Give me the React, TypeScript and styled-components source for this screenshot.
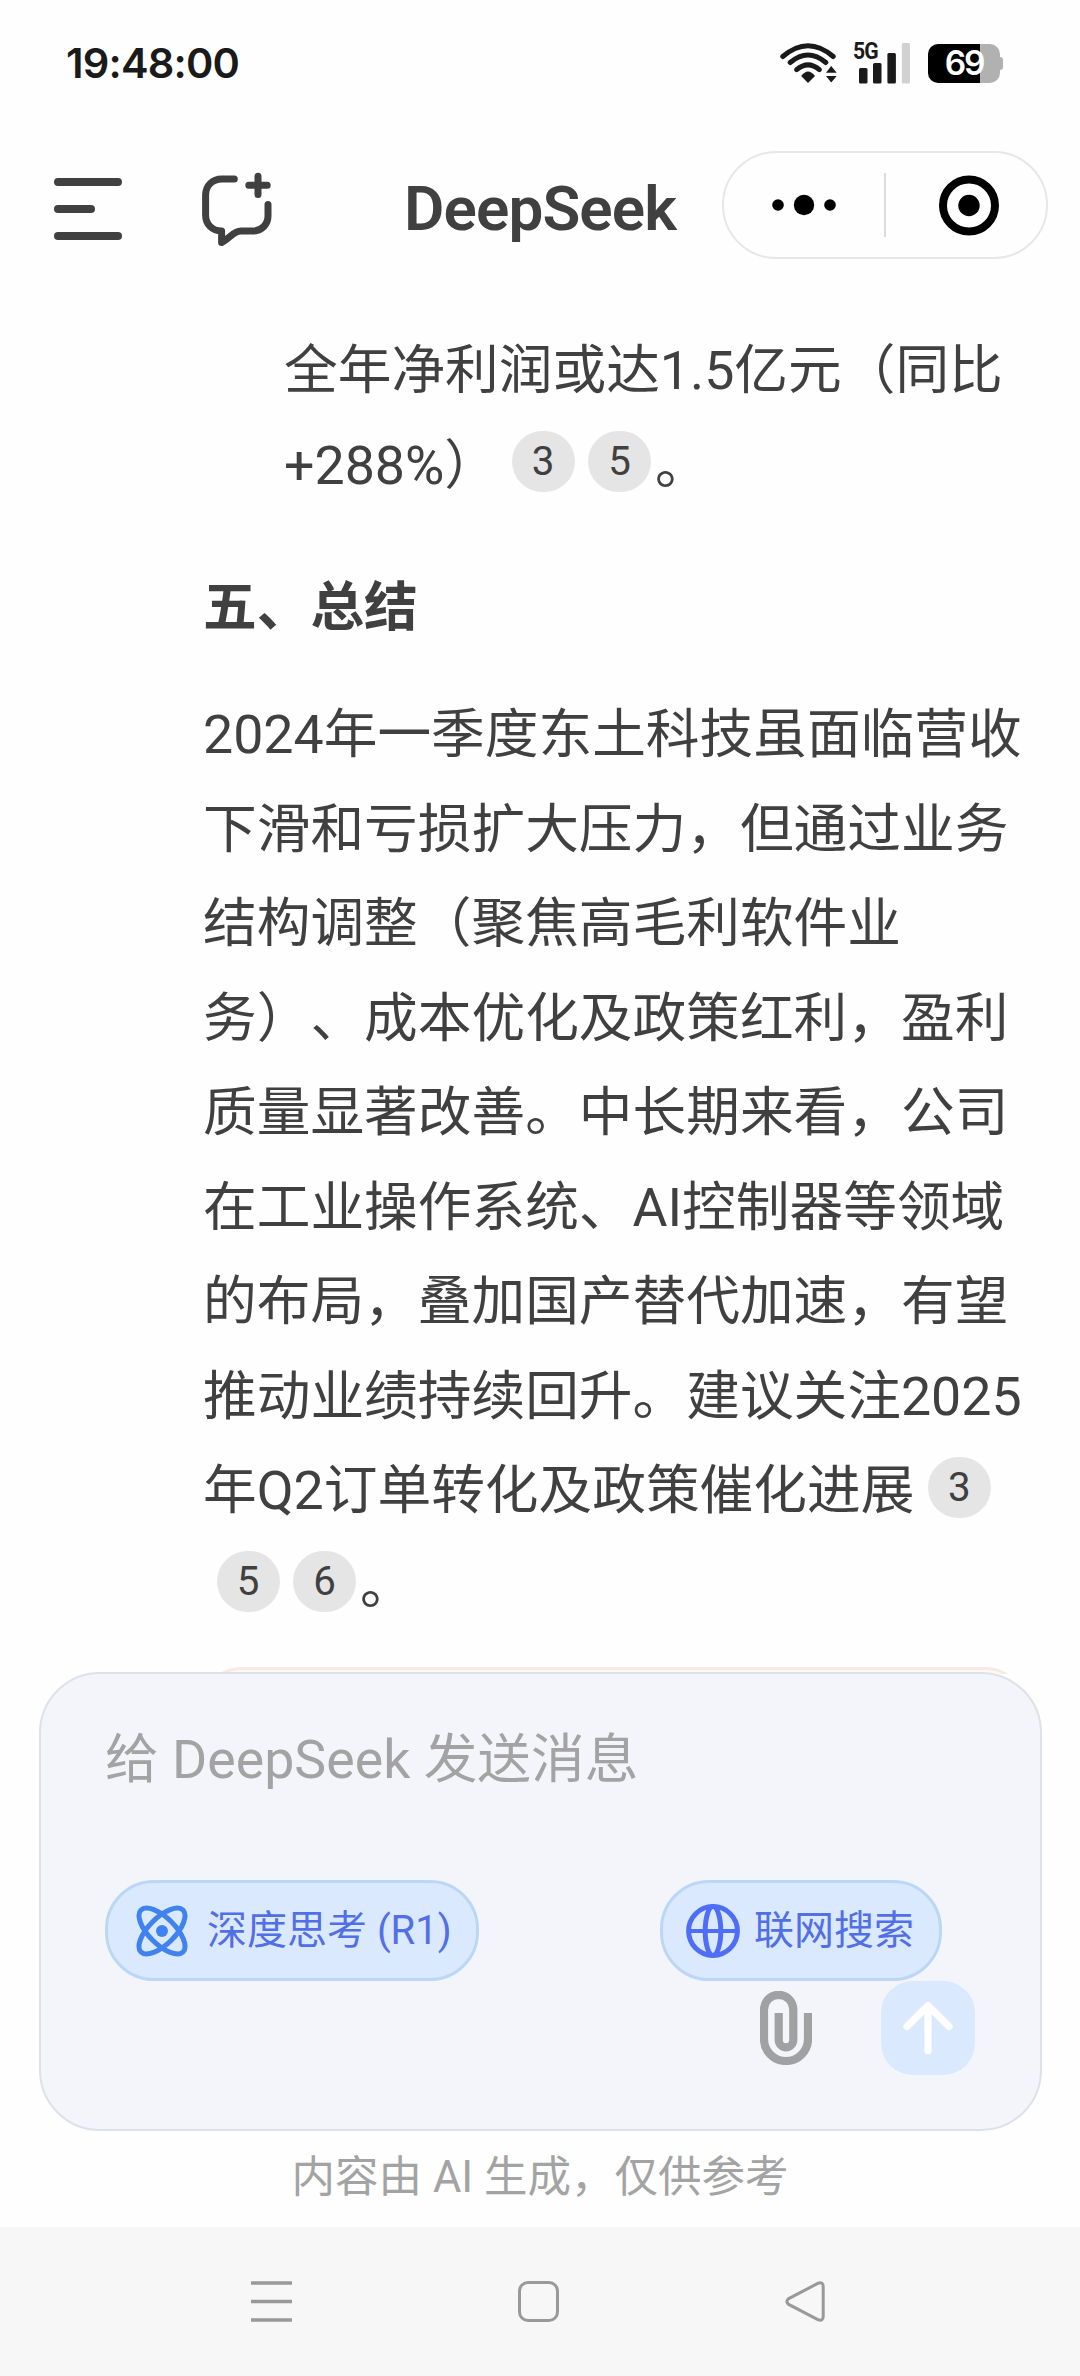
import React from "react";
import styled, { createGlobalStyle } from "styled-components";

const GlobalStyle = createGlobalStyle`
  * { box-sizing: border-box; }
  html, body { margin: 0; padding: 0; background: #fefefe; }
  svg { display: block; flex: none; }
`;

const Screen = styled.div`
  width: 1080px;
  height: 2376px;
  overflow: hidden;
  display: flex;
  flex-direction: column;
  background: #fefefe;
  color: #404040;
  font-family: Roboto, "Noto Sans CJK SC", sans-serif;
  text-spacing-trim: space-all;
`;

const StatusBar = styled.div`
  height: 124px;
  flex: none;
  display: flex;
  align-items: center;
  justify-content: space-between;
  padding: 2px 77px 0 66px;
`;

const Clock = styled.span`
  font: 600 41.5px/50px Inter, sans-serif;
  letter-spacing: -0.8px;
  color: #1a1a1a;
`;

const StatusIcons = styled.div`
  display: flex;
  align-items: center;
`;

const Signal = styled.div`
  position: relative;
  margin: 0 18px 0 16px;
`;

const NetworkType = styled.span`
  position: absolute;
  left: 0;
  top: -1px;
  font: 700 24px/20px Roboto, sans-serif;
  letter-spacing: -1px;
  transform: scaleX(0.88);
  transform-origin: left;
  color: #1a1a1a;
`;

const Battery = styled.div`
  width: 72px;
  height: 39px;
  border-radius: 10px;
  display: flex;
  align-items: center;
  justify-content: center;
  background: linear-gradient(90deg, #000 52px, #b1b1b1 52px);
  color: #fff;
  font: 600 33.5px/39px Inter, sans-serif;
  letter-spacing: -2.2px;
`;

const BatteryTip = styled.div`
  width: 3px;
  height: 13px;
  border-radius: 0 3px 3px 0;
  background: #b1b1b1;
`;

const Header = styled.header`
  height: 151px;
  flex: none;
  display: flex;
  align-items: flex-start;
  padding: 27px 32px 0 54px;
`;

const Title = styled.h1`
  margin: 20px 0 0 132px;
  width: 319px;
  font-size: 62px;
  line-height: 76px;
  font-weight: 600;
  letter-spacing: -0.9px;
  white-space: nowrap;
`;

const Capsule = styled.div`
  width: 326px;
  height: 108px;
  border: 2px solid #e7e7e7;
  border-radius: 54px;
  display: flex;
  align-items: center;
`;

const CapsuleHalf = styled.div<{ $shift?: number }>`
  flex: 0 0 160px;
  display: flex;
  justify-content: center;
  padding-left: ${(p) => p.$shift ?? 0}px;
`;

const CapsuleDivider = styled.div`
  width: 2px;
  height: 64px;
  background: #dcdcdc;
`;

const Conversation = styled.main`
  height: 1399px;
  flex: none;
  overflow: hidden;
  padding: 49px 52px 0 203px;
`;

const ListText = styled.p`
  margin: 0 0 0 81px;
  font-size: 53.7px;
  line-height: 94.5px;
`;

const SectionTitle = styled.h3`
  margin: 48px 0 32.5px;
  font-size: 53.7px;
  line-height: 94.5px;
  font-weight: 700;
`;

const Paragraph = styled.p`
  margin: 0;
  font-size: 53.7px;
  line-height: 94.5px;
`;

const Cite = styled.span`
  display: inline-flex;
  align-items: center;
  justify-content: center;
  width: 63px;
  height: 61px;
  margin-left: 13.5px;
  border-radius: 31px;
  background: #e5e5e5;
  font-size: 40.3px;
  line-height: 61px;
  vertical-align: 8.5px;

  &:last-of-type {
    margin-right: 4px;
  }
`;

const Notice = styled.div`
  height: 120px;
  margin: 33.5px 4px 0 0;
  border: 3px solid #f8e9e2;
  border-radius: 38px;
  background: #fff8f5;
`;

const Composer = styled.section`
  position: relative;
  flex: none;
  width: 1003px;
  height: 459px;
  margin: -2px 0 0 39px;
  padding: 49px 65px 0 64px;
  border: 2px solid #dde1e8;
  border-radius: 61px;
  background: #f3f5fa;
`;

const Placeholder = styled.div`
  height: 157px;
  font-size: 53.7px;
  line-height: 74px;
  color: #a3a3a3;
`;

const ToggleRow = styled.div`
  display: flex;
  gap: 181px;
`;

const Toggle = styled.div<{ $width: number; $inset: number; $gap: number }>`
  width: ${(p) => p.$width}px;
  height: 101px;
  display: flex;
  align-items: center;
  gap: ${(p) => p.$gap}px;
  padding-left: ${(p) => p.$inset}px;
  border: 3px solid #bbd7f6;
  border-radius: 49px;
  background: #dae9fe;
  color: #526fe6;
  font-size: 40px;
  line-height: 60px;
  white-space: nowrap;
`;

const ActionRow = styled.div`
  display: flex;
  justify-content: flex-end;
  align-items: center;
  gap: 69px;
`;

const SendButton = styled.div`
  width: 94px;
  height: 94px;
  border-radius: 32px;
  background: #dbe9fe;
  display: flex;
  align-items: center;
  justify-content: center;
`;

const Disclaimer = styled.div`
  flex: none;
  height: 96px;
  padding-top: 17px;
  text-align: center;
  font-size: 43.5px;
  line-height: 60px;
  color: #a3a3a3;
`;

const NavBar = styled.nav`
  flex: 1;
  display: flex;
  align-items: flex-start;
  justify-content: space-between;
  padding: 54px 255px 0 251px;
  background: #f7f7f7;
`;

const MenuIcon = () => (
  <svg width="68" height="62" viewBox="0 0 68 62" stroke="#404040" strokeWidth="8" strokeLinecap="round">
    <path d="M4 4H64M4 31H37M4 58H64" />
  </svg>
);

const IconSlot = styled.div<{ $left: number; $top: number }>`
  margin: ${(p) => p.$top}px 0 0 ${(p) => p.$left}px;
`;

const NewChatIcon = () => (
  <svg width="70" height="75" viewBox="202 172 70 75" fill="none" stroke="#404040" strokeWidth="7" strokeLinecap="round" strokeLinejoin="round">
    <path d="M234.3 179H222C212 179 205.6 186 205.6 195V215C205.6 224 212 231 221.6 231V242.5C229 239 233 231 241 231H253C262 231 268 224 268 216V204.5" />
    <path d="M258 176.2V194.5M248.8 185.3H267.2" />
  </svg>
);

const WifiIcon = () => (
  <svg width="57" height="42" viewBox="780 42 57 42" fill="none" stroke="#1a1a1a" strokeWidth="5" strokeLinecap="round">
    <path d="M782.8 56.5Q808 35 833.2 56.5M790.2 62.5Q808 47.5 825.8 62.5M796.7 69.7Q808 60 819.3 69.7" />
    <path d="M801.2 76Q808 66.8 815 76L808 83Z" fill="#1a1a1a" stroke="none" />
    <path d="M826 72.7L831.2 66L836.7 72.7ZM826 76L831.2 82.5L836.7 76Z" fill="#1a1a1a" stroke="none" />
  </svg>
);

const SignalBars = () => (
  <svg width="57" height="42" viewBox="853 42 57 42" fill="#1a1a1a">
    <rect x="859" y="68" width="8.5" height="15.5" rx="1.5" />
    <rect x="873" y="63" width="8.5" height="20.5" rx="1.5" />
    <rect x="887.4" y="53" width="8.5" height="30.5" rx="1.5" />
    <rect x="901.8" y="43" width="8.2" height="40.5" rx="1.5" fill="#d1d1d1" />
  </svg>
);

const DotsIcon = () => (
  <svg width="64" height="22" viewBox="0 0 64 22">
    <circle cx="6" cy="11" r="5.8" />
    <circle cx="32" cy="11" r="10.2" />
    <circle cx="58" cy="11" r="5.8" />
  </svg>
);

const TargetIcon = () => (
  <svg width="60" height="62" viewBox="0 0 60 62">
    <circle cx="30" cy="31.5" r="26" fill="none" stroke="#000" strokeWidth="8" />
    <circle cx="30" cy="31.5" r="10.7" />
  </svg>
);

const AtomIcon = () => (
  <svg width="52" height="52" viewBox="-26 -26 52 52" fill="none" stroke="#4083ef" strokeWidth="5">
    <ellipse rx="29.7" ry="13.2" transform="rotate(45)" />
    <ellipse rx="29.7" ry="13.2" transform="rotate(-45)" />
    <circle r="6" fill="#4083ef" stroke="none" />
  </svg>
);

const GlobeIcon = () => (
  <svg width="54" height="54" viewBox="-27 -27 54 54" fill="none" stroke="#4f6ef7" strokeWidth="5">
    <circle r="24.4" />
    <ellipse rx="7.8" ry="24.4" />
    <path d="M-25 0H25" strokeWidth="4" />
  </svg>
);

const ClipIcon = () => (
  <svg width="52" height="74" viewBox="760 1991 52 74" fill="none" stroke="#a0a1a3" strokeWidth="8.2">
    <path d="M808 2013V2039a22 22 0 0 1-44 0V2009.5a14.65 14.65 0 0 1 29.3 0V2040a7.3 7.3 0 0 1-14.6 0V2013" />
  </svg>
);

const ArrowUpIcon = () => (
  <svg width="50" height="54" viewBox="0 0 50 54" fill="none" stroke="#fff" strokeWidth="7.2" strokeLinecap="round" strokeLinejoin="round">
    <path d="M25 50V4.5M4 25.5L25 4.5L46 25.5" />
  </svg>
);

export default function App() {
  return (
    <Screen>
      <GlobalStyle />
      <StatusBar>
        <Clock>19:48:00</Clock>
        <StatusIcons>
          <WifiIcon />
          <Signal>
            <SignalBars />
            <NetworkType>5G</NetworkType>
          </Signal>
          <Battery>69</Battery>
          <BatteryTip />
        </StatusIcons>
      </StatusBar>

      <Header>
        <IconSlot $left={0} $top={27}>
          <MenuIcon />
        </IconSlot>
        <IconSlot $left={80} $top={21}>
          <NewChatIcon />
        </IconSlot>
        <Title>DeepSeek</Title>
        <Capsule>
          <CapsuleHalf>
            <DotsIcon />
          </CapsuleHalf>
          <CapsuleDivider />
          <CapsuleHalf $shift={6}>
            <TargetIcon />
          </CapsuleHalf>
        </Capsule>
      </Header>

      <Conversation>
        <ListText>
          全年净利润或达1.5亿元（同比+288%）<Cite>3</Cite>
          <Cite>5</Cite>。
        </ListText>
        <SectionTitle>五、总结</SectionTitle>
        <Paragraph>
          2024年一季度东土科技虽面临营收下滑和亏损扩大压力，但通过业务结构调整（聚焦高毛利软件业务）、成本优化及政策红利，盈利质量显著改善。中长期来看，公司在工业操作系统、AI控制器等领域的布局，叠加国产替代加速，有望推动业绩持续回升。建议关注2025年Q2订单转化及政策催化进展<Cite>3</Cite>
          <Cite>5</Cite>
          <Cite>6</Cite>。
        </Paragraph>
        <Notice />
      </Conversation>

      <Composer>
        <Placeholder>给 DeepSeek 发送消息</Placeholder>
        <ToggleRow>
          <Toggle $width={374} $inset={28} $gap={19}>
            <AtomIcon />
            深度思考 (R1)
          </Toggle>
          <Toggle $width={282} $inset={23} $gap={14}>
            <GlobeIcon />
            联网搜索
          </Toggle>
        </ToggleRow>
        <ActionRow>
          <ClipIcon />
          <SendButton>
            <ArrowUpIcon />
          </SendButton>
        </ActionRow>
      </Composer>

      <Disclaimer>内容由 AI 生成，仅供参考</Disclaimer>

      <NavBar>
        <svg width="41" height="41" viewBox="0 0 41 41" stroke="#999" strokeWidth="3.4">
          <path d="M0 2H41M0 20.5H41M0 39H41" />
        </svg>
        <svg width="41" height="41" viewBox="0 0 41 41" fill="none" stroke="#999" strokeWidth="3">
          <rect x="1.5" y="1.5" width="38" height="38" rx="8.5" />
        </svg>
        <svg width="40" height="41" viewBox="0 0 40 41" fill="none" stroke="#999" strokeWidth="3">
          <path d="M33.2 2.2L3.3 17.8Q0.6 20.5 3.3 23.2L33.2 38.8Q38.2 40.4 38.2 35.5V5.5Q38.2 0.6 33.2 2.2Z" />
        </svg>
      </NavBar>
    </Screen>
  );
}
